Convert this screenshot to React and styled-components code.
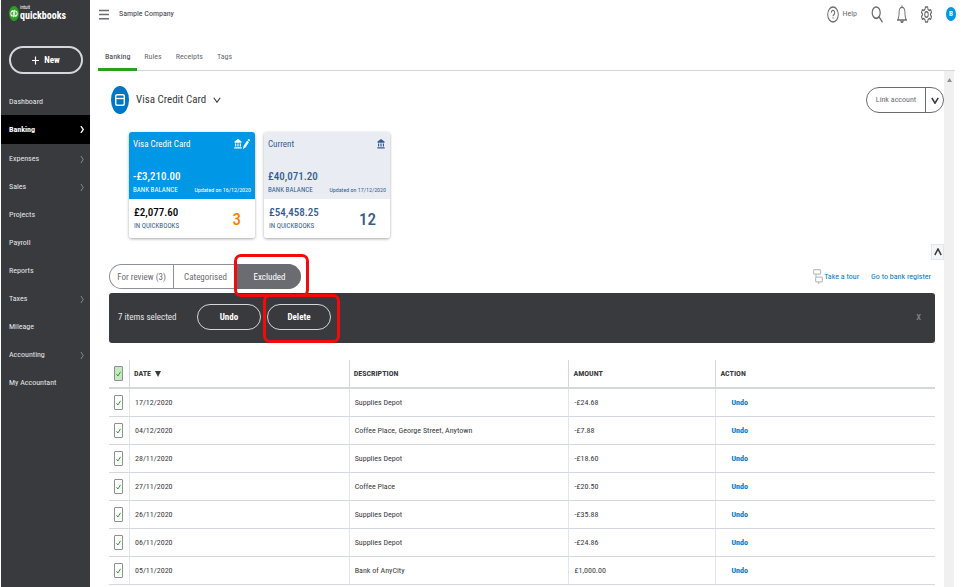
import React, { useState } from 'react'
import styled, { createGlobalStyle, css } from 'styled-components'

const navItems = [
    { name: 'Dashboard' },
    { name: 'Banking', more: true, active: true },
    { name: 'Expenses', more: true },
    { name: 'Sales', more: true },
    { name: 'Projects' },
    { name: 'Payroll' },
    { name: 'Reports' },
    { name: 'Taxes', more: true },
    { name: 'Mileage' },
    { name: 'Accounting', more: true },
    { name: 'My Accountant' },
]

const tabs = ['Banking', 'Rules', 'Receipts', 'Tags']

const transactions = [
    { id: 1, date: '17/12/2020', description: 'Supplies Depot', amount: '-£24.68' },
    { id: 2, date: '04/12/2020', description: 'Coffee Place, George Street, Anytown', amount: '-£7.88' },
    { id: 3, date: '28/11/2020', description: 'Supplies Depot', amount: '-£18.60' },
    { id: 4, date: '27/11/2020', description: 'Coffee Place', amount: '-£20.50' },
    { id: 5, date: '26/11/2020', description: 'Supplies Depot', amount: '-£35.88' },
    { id: 6, date: '06/11/2020', description: 'Supplies Depot', amount: '-£24.86' },
    { id: 7, date: '05/11/2020', description: 'Bank of AnyCity', amount: '£1,000.00' },
]

function Chevron({ dir = 'down', width = 8, height = 6, stroke = 1.4 }) {
    const paths = {
        down: 'M1 1 L5 7 L9 1',
        up: 'M1 7 L5 1 L9 7',
        right: 'M3 0 L7 4 L3 8',
    }
    return (
        <svg width={width} height={height} viewBox="0 0 10 8" preserveAspectRatio="none" fill="none" stroke="currentColor" strokeWidth={stroke} aria-hidden="true">
            <path d={paths[dir]} />
        </svg>
    )
}

function BankIcon() {
    return (
        <svg width="8" height="10" viewBox="0 0 8 10" fill="currentColor" aria-hidden="true">
            <path d="M4 0 L7.5 2.6 V3.8 H0.5 V2.6 Z M1 4.4 H2.2 V7.6 H1 Z M3.4 4.4 H4.6 V7.6 H3.4 Z M5.8 4.4 H7 V7.6 H5.8 Z M0.3 8.2 H7.7 V9.6 H0.3 Z" />
        </svg>
    )
}

function Tick(props) {
    return (
        <TickBox>
            <TickInput type="checkbox" {...props} />
            <svg width="5" height="6" viewBox="0 0 5 6" fill="none" stroke="#2ca01c" strokeWidth="1" aria-hidden="true">
                <path d="M0.5 3.2 L1.9 5 L4.6 0.8" />
            </svg>
        </TickBox>
    )
}

function Sidebar() {
    return (
        <Side>
            <Logo>
                <svg width="10" height="15" viewBox="0 0 20 20" preserveAspectRatio="none" aria-hidden="true">
                    <circle cx="10" cy="10" r="10" fill="#2ca01c" />
                    <path d="M8.6 15 V6.6 H7 a3.3 3.3 0 0 0 0 6.6 M11.4 5 V13.4 H13 a3.3 3.3 0 0 0 0 -6.6" fill="none" stroke="#fff" strokeWidth="1.9" />
                </svg>
                <LogoText><small>intuit</small>quickbooks</LogoText>
            </Logo>
            <NewButton>
                <svg width="7" height="9" viewBox="0 0 7 9" stroke="#fff" strokeWidth="1.2" aria-hidden="true">
                    <path d="M3.5 0.5 V8.5 M0 4.5 H7" />
                </svg>
                New
            </NewButton>
            <nav>
                {navItems.map(item => (
                    <NavLink key={item.name} href="#" $active={item.active}>
                        {item.name}
                        {item.more && <Chevron dir="right" width={6} height={7} stroke={item.active ? 2 : 1.2} />}
                    </NavLink>
                ))}
            </nav>
        </Side>
    )
}

function TopBar() {
    return (
        <Top>
            <IconButton aria-label="Menu">
                <svg width="10" height="11" viewBox="0 0 10 11" stroke="#6b6c72" strokeWidth="1.6" aria-hidden="true">
                    <path d="M0 1.5 H10 M0 5.5 H10 M0 9.7 H10" />
                </svg>
            </IconButton>
            <Company>Sample Company</Company>
            <TopTools>
                <HelpButton>
                    <svg width="12" height="17" viewBox="0 0 24 24" preserveAspectRatio="none" fill="none" stroke="#6b6c72" strokeWidth="2" aria-hidden="true">
                        <circle cx="12" cy="12" r="10.6" />
                        <path d="M8.6 9.4 a3.4 3.2 0 1 1 5 2.8 c-1.2 .7 -1.6 1 -1.6 2.2 M12 16 v1.8" />
                    </svg>
                    Help
                </HelpButton>
                <IconButton aria-label="Search">
                    <svg width="12" height="17" viewBox="0 0 24 24" preserveAspectRatio="none" fill="none" stroke="#6b6c72" strokeWidth="2.4" aria-hidden="true">
                        <circle cx="10.4" cy="9.4" r="8" />
                        <path d="M16 15.4 L23 23" />
                    </svg>
                </IconButton>
                <IconButton aria-label="Notifications">
                    <svg width="10" height="18" viewBox="0 0 24 24" preserveAspectRatio="none" fill="none" stroke="#6b6c72" strokeWidth="2.2" aria-hidden="true">
                        <path d="M12 .5 V3 M1.5 20 C4.5 17.5 5 15 5 9.5 C5 5.5 8 3 12 3 C16 3 19 5.5 19 9.5 C19 15 19.5 17.5 22.5 20 Z M9 21 C9.5 23.6 14.5 23.6 15 21" />
                    </svg>
                </IconButton>
                <IconButton aria-label="Settings">
                    <svg width="11" height="17" viewBox="0 0 24 24" preserveAspectRatio="none" fill="none" stroke="#6b6c72" strokeWidth="2.2" strokeLinejoin="round" aria-hidden="true">
                        <path d="M9.5 1.5 H14.5 L15.3 4.8 L18 6.3 L21 5.2 L23 9 L20.6 11.5 V12.5 L23 15 L21 18.8 L18 17.7 L15.3 19.2 L14.5 22.5 H9.5 L8.7 19.2 L6 17.7 L3 18.8 L1 15 L3.4 12.5 V11.5 L1 9 L3 5.2 L6 6.3 L8.7 4.8 Z" />
                        <circle cx="12" cy="12" r="3.8" />
                    </svg>
                </IconButton>
                <Avatar aria-label="Profile">B</Avatar>
            </TopTools>
        </Top>
    )
}

function AccountCard(props) {
    const { name, bank, updated, books, count, selected } = props
    return (
        <Card>
            <CardTop $selected={selected}>
                <CardTitle>
                    {name}
                    <CardIcons>
                        <BankIcon />
                        {selected && <IconButton aria-label="Edit account">
                            <svg width="7" height="10" viewBox="0 0 7 10" fill="#fff" aria-hidden="true">
                                <path d="M0 10 L0.6 7 L4.2 1.6 L5.9 3.2 L2.3 8.8 Z M4.7 0.9 L5.3 0.2 Q6 -0.2 6.8 0.8 Q7.2 1.4 6.4 2.5 Z" />
                            </svg>
                        </IconButton>}
                    </CardIcons>
                </CardTitle>
                <div>
                    <Amount>{bank}</Amount>
                    <CardLine>
                        <CardLabel>BANK BALANCE</CardLabel>
                        <Updated>Updated on {updated}</Updated>
                    </CardLine>
                </div>
            </CardTop>
            <CardBottom>
                <div>
                    <Amount $dark={selected}>{books}</Amount>
                    <CardLabel>IN QUICKBOOKS</CardLabel>
                </div>
                <Count $pending={selected}>{count}</Count>
            </CardBottom>
        </Card>
    )
}

function Transactions() {
    const [picked, setPicked] = useState(transactions.map(t => t.id))

    const toggle = id => setPicked(picked.includes(id) ? picked.filter(p => p !== id) : [...picked, id])
    const toggleAll = () => setPicked(picked.length ? [] : transactions.map(t => t.id))

    return (
        <>
            <ActionBar>
                <Selected>{picked.length} items selected</Selected>
                <PillButton>Undo</PillButton>
                <DeleteMark><PillButton>Delete</PillButton></DeleteMark>
                <CloseButton aria-label="Close">x</CloseButton>
            </ActionBar>
            <Table>
                <thead>
                    <tr>
                        <CheckHead><Tick $all aria-label="Select all" checked={picked.length > 0} onChange={toggleAll} /></CheckHead>
                        <Th $width="26.6%">
                            <SortButton>
                                DATE
                                <svg width="6" height="6" viewBox="0 0 6 6" fill="#393a3d" aria-hidden="true"><path d="M0 0 H6 L3 6 Z" /></svg>
                            </SortButton>
                        </Th>
                        <Th $width="26.6%">DESCRIPTION</Th>
                        <Th $width="17.8%">AMOUNT</Th>
                        <Th>ACTION</Th>
                    </tr>
                </thead>
                <tbody>
                    {transactions.map(t => (
                        <tr key={t.id}>
                            <CheckCell><Tick aria-label={'Select ' + t.date} checked={picked.includes(t.id)} onChange={() => toggle(t.id)} /></CheckCell>
                            <Td>{t.date}</Td>
                            <Td>{t.description}</Td>
                            <Td>{t.amount}</Td>
                            <ActionCell><UndoButton>Undo</UndoButton></ActionCell>
                        </tr>
                    ))}
                </tbody>
            </Table>
        </>
    )
}

export default function App() {
    return (
        <Page>
            <GlobalStyle />
            <Sidebar />
            <Main>
                <TopBar />
                <Tabs>
                    {tabs.map(t => <Tab key={t} href="#" $active={t === 'Banking'}>{t}</Tab>)}
                </Tabs>
                <Body>
                    <Content>
                        <AccountRow>
                            <AccountButton>
                                <svg width="18" height="28" viewBox="0 0 18 28" aria-hidden="true">
                                    <ellipse cx="9" cy="14" rx="9" ry="14" fill="#0077c5" />
                                    <rect x="4.7" y="8.7" width="8.6" height="10.6" rx="1.5" fill="none" stroke="#fff" strokeWidth="1.4" />
                                    <path d="M4.7 12.5 H13.3" stroke="#fff" strokeWidth="1.4" />
                                </svg>
                                Visa Credit Card
                                <Chevron />
                            </AccountButton>
                            <LinkAccount>
                                <LinkButton>Link account</LinkButton>
                                <LinkMore aria-label="More link options"><Chevron stroke={2} height={7} /></LinkMore>
                            </LinkAccount>
                        </AccountRow>
                        <Cards>
                            <AccountCard selected name="Visa Credit Card" bank="-£3,210.00" updated="16/12/2020" books="£2,077.60" count="3" />
                            <AccountCard name="Current" bank="£40,071.20" updated="17/12/2020" books="£54,458.25" count="12" />
                        </Cards>
                        <CollapseButton aria-label="Hide accounts"><Chevron dir="up" height={8} stroke={1.8} /></CollapseButton>
                        <FilterRow>
                            <Segment>For review (3)</Segment>
                            <Segment>Categorised</Segment>
                            <ExcludedMark><Segment $active>Excluded</Segment></ExcludedMark>
                            <Links>
                                <TextLink href="#">
                                    <svg width="10" height="15" viewBox="0 0 10 15" fill="none" stroke="#babec5" strokeWidth="1.2" aria-hidden="true">
                                        <rect x="0.6" y="0.6" width="7" height="4.6" rx="1" />
                                        <rect x="2.6" y="8.2" width="6.8" height="4.6" rx="1" />
                                        <path d="M3 5.2 V8.2 M5.5 12.8 V15" />
                                    </svg>
                                    Take a tour
                                </TextLink>
                                <TextLink href="#">Go to bank register</TextLink>
                            </Links>
                        </FilterRow>
                        <Transactions />
                    </Content>
                    <ScrollTrack>
                        <svg width="5" height="4" viewBox="0 0 5 4" fill="#8d9096" aria-hidden="true"><path d="M0 4 L2.5 0 L5 4 Z" /></svg>
                    </ScrollTrack>
                </Body>
            </Main>
        </Page>
    )
}


const GlobalStyle = createGlobalStyle`
    * {
        box-sizing: border-box;
    }
    body {
        margin: 0;
        background: #fff;
        color: #393a3d;
        font-family: "Roboto Condensed", "Arial Narrow", Lato, sans-serif;
        font-size: 8px;
        line-height: 12px;
    }
    button {
        margin: 0;
        padding: 0;
        border: 0;
        background: none;
        color: inherit;
        font: inherit;
        cursor: pointer;
    }
    a {
        text-decoration: none;
        color: inherit;
    }
    svg {
        display: block;
        flex: none;
    }
`

const Page = styled.div`
    display: flex;
    min-height: 100vh;
    padding-left: 1px;
    white-space: nowrap;
`

const Side = styled.aside`
    flex: none;
    width: 89px;
    padding-top: 4px;
    background: #393a3d;
    color: #e3e5e8;
`

const Logo = styled.div`
    display: flex;
    align-items: center;
    gap: 1px;
    height: 18px;
    padding-left: 8px;
    color: #fff;
`

const LogoText = styled.span`
    display: flex;
    flex-direction: column;
    font-size: 10px;
    font-weight: bold;
    line-height: 12px;

    small {
        font-size: 5px;
        font-weight: normal;
        line-height: 6px;
    }
`

const NewButton = styled.button`
    display: flex;
    align-items: center;
    justify-content: center;
    gap: 5px;
    width: 74px;
    height: 28px;
    margin: 24px 8px 13px;
    border: 2px solid #d4d7dc;
    border-radius: 14px;
    color: #fff;
    font-size: 9px;
    font-weight: bold;
`

const NavLink = styled.a`
    display: flex;
    align-items: center;
    justify-content: space-between;
    height: 28px;
    padding: 2px 5px 0 8px;

    svg {
        color: #8d9096;
    }

    ${({ $active }) => $active && css`
        height: 29px;
        padding-top: 0;
        background: #000;
        color: #fff;
        font-weight: bold;

        svg {
            color: #fff;
        }
    `}
`

const Main = styled.div`
    display: flex;
    flex: 1;
    flex-direction: column;
    min-width: 0;
    padding: 0 13px 0 8px;
`

const Top = styled.header`
    display: flex;
    align-items: center;
    gap: 10px;
    height: 28px;
    padding-left: 1px;
`

const IconButton = styled.button`
    display: flex;
    align-items: center;
`

const Company = styled.span`
    font-size: 8px;
`

const TopTools = styled.div`
    display: flex;
    align-items: center;
    gap: 14px;
    margin-left: auto;
`

const HelpButton = styled(IconButton)`
    gap: 4px;
    color: #6b6c72;
    font-size: 8px;
`

const Avatar = styled.button`
    width: 10px;
    height: 14px;
    margin-right: -1px;
    border-radius: 50%;
    background: #0097e6;
    color: #fff;
    font-size: 7px;
    font-weight: bold;
`

const Tabs = styled.nav`
    display: flex;
    align-items: flex-end;
    height: 43px;
    border-bottom: 1px solid #d4d7dc;
`

const Tab = styled.a`
    height: 27px;
    margin-bottom: -1px;
    padding: 7px 7px 0;
    border-bottom: 3px solid transparent;
    color: #6b6c72;

    ${({ $active }) => $active && css`
        border-color: #2ca01c;
        color: #393a3d;
    `}
`

const Body = styled.div`
    display: flex;
    flex: 1;
`

const Content = styled.main`
    display: flex;
    flex: 1;
    flex-direction: column;
    min-width: 0;
    padding: 15px 9px 0 11px;
`

const ScrollTrack = styled.div`
    display: flex;
    justify-content: center;
    width: 10px;
    margin-right: 1px;
    padding-top: 7px;
    background: #f0f0f0;
`

const AccountRow = styled.div`
    display: flex;
    align-items: center;
    justify-content: space-between;
    height: 28px;
    margin-right: -9px;
    padding-left: 2px;
`

const AccountButton = styled.button`
    display: flex;
    align-items: center;
    gap: 7px;
    font-size: 11px;
`

const LinkAccount = styled.div`
    display: flex;
    height: 26px;
    border: 1px solid #6b6c72;
    border-radius: 13px;
`

const LinkButton = styled.button`
    width: 59px;
    border-right: 1px solid #6b6c72;
    color: #6b6c72;
`

const LinkMore = styled.button`
    display: flex;
    align-items: center;
    justify-content: center;
    width: 17px;
`

const Cards = styled.div`
    display: flex;
    gap: 9px;
    padding: 18px 20px 0;
`

const Card = styled.article`
    width: 126px;
    border-radius: 3px;
    box-shadow: 0 1px 3px rgba(0, 0, 0, 0.35);
    color: #355d92;
`

const CardTop = styled.div`
    display: flex;
    flex-direction: column;
    justify-content: space-between;
    height: 67px;
    padding: 6px 4px 3px;
    border-radius: 3px 3px 0 0;
    background: ${({ $selected }) => $selected ? '#0097e6' : '#e9edf3'};
    color: ${({ $selected }) => $selected ? '#fff' : '#355d92'};
`

const CardTitle = styled.div`
    display: flex;
    justify-content: space-between;
    font-size: 9px;
`

const CardIcons = styled.span`
    display: flex;
    align-items: center;
    gap: 1px;
    padding-right: 1px;
`

const CardLine = styled.div`
    display: flex;
    align-items: center;
    justify-content: space-between;
`

const Amount = styled.div`
    font-size: 11px;
    font-weight: 500;
    line-height: 14px;
    ${({ $dark }) => $dark && css`
        color: #000;
    `}
`

const CardLabel = styled.div`
    font-size: 7px;
`

const Updated = styled.div`
    font-size: 6px;
`

const CardBottom = styled.div`
    display: flex;
    align-items: center;
    justify-content: space-between;
    height: 39px;
    padding: 0 14px 0 5px;
    border-radius: 0 0 3px 3px;
    background: #fff;
`

const Count = styled.div`
    color: ${({ $pending }) => $pending ? '#ff8000' : '#355d92'};
    font-size: 17px;
    font-weight: 500;
`

const CollapseButton = styled.button`
    display: flex;
    align-items: center;
    justify-content: center;
    align-self: flex-end;
    width: 13px;
    height: 16px;
    margin: 6px -9px 0 0;
    border: 1px solid #e3e5e8;
    background: #f4f5f8;
`

const FilterRow = styled.div`
    display: flex;
    align-items: center;
    margin-top: 4px;
`

const Segment = styled.button`
    width: 64px;
    height: 25px;
    border: 1px solid #8d9096;
    border-right-width: 0;
    color: #6b6c72;
    font-size: 9px;

    &:first-child {
        border-radius: 13px 0 0 13px;
    }

    ${({ $active }) => $active && css`
        &:first-child {
            border-color: #6b6c72;
            border-radius: 0 13px 13px 0;
        }
        background: #6b6c72;
        color: #fff;
    `}
`

/* red frame that points out a control */
const Mark = styled.span`
    position: relative;

    &::after {
        content: "";
        position: absolute;
        border: 3px solid #f00c0c;
        border-radius: 7px;
        pointer-events: none;
    }
`

const ExcludedMark = styled(Mark)`
    &::after {
        inset: -10px -8px -8px -3px;
    }
`

const DeleteMark = styled(Mark)`
    &::after {
        inset: -10px -9px -13px -4px;
    }
`

const Links = styled.div`
    display: flex;
    gap: 12px;
    margin-left: auto;
    padding-right: 4px;
`

const TextLink = styled.a`
    display: flex;
    align-items: center;
    gap: 1px;
    color: #0077c5;
`

const ActionBar = styled.div`
    display: flex;
    align-items: center;
    gap: 6px;
    height: 50px;
    margin-top: 4px;
    padding: 0 14px 2px 9px;
    border-radius: 3px;
    background: #393a3d;
    color: #fff;
`

const Selected = styled.span`
    width: 73px;
    color: #e3e5e8;
    font-size: 9px;
`

const PillButton = styled.button`
    width: 64px;
    height: 26px;
    border: 1px solid #d4d7dc;
    border-radius: 13px;
    font-size: 9px;
    font-weight: bold;
`

const CloseButton = styled.button`
    margin-left: auto;
    color: #8d9096;
    font-size: 11px;
`

const Table = styled.table`
    width: 100%;
    margin-top: 17px;
    border-collapse: separate;
    border-spacing: 0;
    table-layout: fixed;
`

const Th = styled.th`
    width: ${({ $width }) => $width || 'auto'};
    height: 29px;
    padding: 0 4px;
    border-bottom: 2px solid #d4d7dc;
    border-left: 1px solid #d4d7dc;
    font-weight: bold;
    text-align: left;
`

const CheckHead = styled(Th)`
    width: 20px;
    padding: 0 5px;
    border-left: 0;
`

const Td = styled.td`
    height: 28px;
    padding: 0 5px;
    border-bottom: 1px solid #d4d7dc;
    border-left: 1px solid #e3e5e8;
`

const CheckCell = styled(Td)`
    border-left: 0;
`

const ActionCell = styled(Td)`
    padding-left: 15px;
`

const SortButton = styled.button`
    display: flex;
    align-items: center;
    gap: 4px;
`

const UndoButton = styled.button`
    color: #0077c5;
    font-weight: bold;
`

const TickBox = styled.span`
    display: grid;
    place-items: center;
    width: 9px;
    height: 15px;

    > * {
        grid-area: 1 / 1;
    }

    svg {
        pointer-events: none;
    }

    input:not(:checked) + svg {
        visibility: hidden;
    }
`

const TickInput = styled.input`
    width: 9px;
    height: 15px;
    margin: 0;
    appearance: none;
    border: 1px solid #8d9096;
    border-radius: 1px;
    background: ${({ $all }) => $all ? '#c5e8c0' : '#fff'};
`
